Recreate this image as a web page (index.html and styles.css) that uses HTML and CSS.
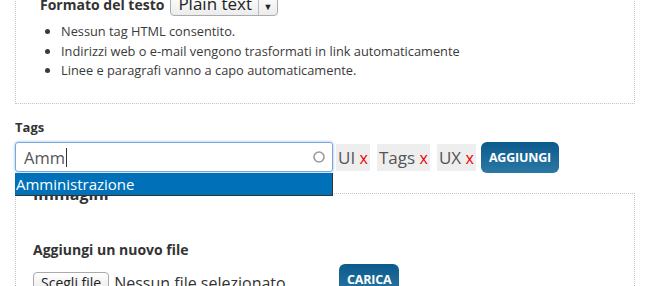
FILE: index.html
```html
<!DOCTYPE html>
<html lang="it">
<head>
    <meta charset="UTF-8">
    <title>Nuovo contenuto</title>
    <link rel="stylesheet" href="styles.css">
</head>
<body>

    <div class="page">
        <!-- Formato del testo -->
        <fieldset class="box box-format">
            <div class="format-row">
                <label class="format-label">Formato del testo</label>
                <div class="select">
                    <span class="select-value">Plain text</span>
                    <span class="select-arrow">&#9660;</span>
                </div>
            </div>
            <ul class="format-tips">
                <li>Nessun tag HTML consentito.</li>
                <li>Indirizzi web o e-mail vengono trasformati in link automaticamente</li>
                <li>Linee e paragrafi vanno a capo automaticamente.</li>
            </ul>
        </fieldset>

        <!-- Tags -->
        <div class="tags">
            <label class="field-label">Tags</label>
            <div class="tags-row">
                <div class="tag-input">
                    <span class="tag-text">Amm</span><span class="caret"></span>
                    <svg class="throbber" width="14" height="14" viewBox="0 0 14 14">
                        <circle cx="7" cy="7" r="5" fill="none" stroke="#9a9a9a" stroke-width="1.6"/>
                    </svg>
                    <div class="autocomplete">Amministrazione</div>
                </div>
                <span class="tag">UI <span class="tag-remove">x</span></span>
                <span class="tag">Tags <span class="tag-remove">x</span></span>
                <span class="tag">UX <span class="tag-remove">x</span></span>
                <button class="btn">Aggiungi</button>
            </div>
        </div>

        <!-- Immagini -->
        <fieldset class="box box-images">
            <legend>Immagini</legend>
            <div class="field-label upload-label">Aggiungi un nuovo file</div>
            <div class="upload-row">
                <div class="file">
                    <span class="file-button">Scegli file</span>
                    <span class="file-name">Nessun file selezionato</span>
                </div>
                <button class="btn">Carica</button>
            </div>
        </fieldset>
    </div>

</body>
</html>
```

FILE: styles.css
```css
body {
    margin: 0;
    font-family: 'Open Sans', 'Liberation Sans', sans-serif;
    color: #333;
    background: #fff;
    overflow: hidden;
}

.page {
    width: 620px;
    padding-left: 15px;
}

/* dotted boxes */
.box {
    margin: 0;
    min-inline-size: 0;
    border: 1px dotted #c4c4c4;
}

.box-format {
    margin-top: -12px;
    padding: 3px 24px 22px 24px;
}

.format-row {
    display: flex;
    align-items: center;
    height: 24px;
}

.format-label {
    font-weight: bold;
    font-size: 14px;
    margin-right: 6px;
}

.select {
    display: flex;
    align-items: stretch;
    height: 22px;
    border: 1px solid #aaa;
    border-radius: 4px;
    background: linear-gradient(#fff, #ececec);
    font-size: 17px;
    color: #222;
}

.select-value {
    padding: 0 6px 0 7px;
    line-height: 22px;
}

.select-arrow {
    border-left: 1px solid #bbb;
    width: 18px;
    font-size: 9px;
    line-height: 28px;
    text-align: center;
}

.format-tips {
    margin: 6px 0 0 0;
    padding-left: 21px;
    font-size: 12.8px;
    line-height: 19.5px;
    color: #3a3a3a;
}

/* tags */
.tags {
    padding-top: 14px;
}

.field-label {
    display: block;
    font-weight: bold;
    font-size: 13px;
    line-height: 18px;
    margin-bottom: 6px;
}

.tags-row {
    display: flex;
    align-items: center;
}

.tag-input {
    position: relative;
    box-sizing: border-box;
    width: 318px;
    height: 30px;
    padding-left: 8px;
    display: flex;
    align-items: center;
    border: 1px solid #7aa7d9;
    border-radius: 3px;
    box-shadow: 0 0 3px rgba(90, 150, 220, 0.7);
    font-size: 16.5px;
    color: #555;
}

.caret {
    display: inline-block;
    width: 1px;
    height: 19px;
    margin-left: 1px;
    background: #333;
}

.throbber {
    margin-left: auto;
    margin-right: 6px;
}

/* autocomplete popup sits over the next box */
.autocomplete {
    position: absolute;
    left: -1px;
    top: 30px;
    z-index: 2;
    box-sizing: border-box;
    width: 318px;
    height: 23px;
    padding-left: 1px;
    background: #0071b9;
    border-right: 1px solid #333;
    border-bottom: 1px solid #333;
    color: #fff;
    font-size: 15px;
    line-height: 22px;
}

.tag {
    margin-left: 3px;
    padding: 0 2px;
    height: 27px;
    line-height: 27px;
    background: #eee;
    font-size: 17px;
    color: #555;
}

.tag + .tag {
    margin-left: 7px;
}

.tag-remove {
    color: #e00;
    font-size: 16px;
}

.btn {
    height: 31px;
    padding: 0 8px;
    margin-left: 5px;
    border: none;
    border-radius: 6px;
    background: linear-gradient(#0b5a8c, #2b78a4);
    color: #fff;
    font-family: 'Open Sans', 'Liberation Sans', sans-serif;
    font-weight: bold;
    font-size: 12.5px;
    letter-spacing: -0.2px;
    text-transform: uppercase;
}

/* images */
.box-images {
    margin-top: 10px;
    padding: 0 17px 20px 17px;
}

.box-images legend {
    padding: 0;
    font-weight: bold;
    font-size: 16px;
    line-height: 22px;
}

.upload-label {
    font-size: 14px;
    line-height: 20px;
    margin-top: 35px;
    margin-bottom: 4px;
}

.upload-row {
    display: flex;
    align-items: flex-start;
}

.file {
    display: flex;
    align-items: center;
    width: 301px;
    margin-top: 8px;
}

.file-button {
    box-sizing: border-box;
    height: 22px;
    padding: 0 7px;
    border: 1px solid #aaa;
    border-radius: 4px;
    background: linear-gradient(#fff, #e8e8e8);
    font-size: 14px;
    line-height: 20px;
    color: #222;
}

.file-name {
    margin-left: 5px;
    font-size: 16px;
    color: #333;
}
```
